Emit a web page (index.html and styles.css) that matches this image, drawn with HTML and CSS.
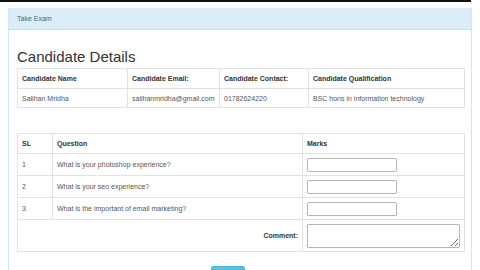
FILE: index.html
```html
<!DOCTYPE html>
<html>
<head>
<meta charset="utf-8">
<link rel="stylesheet" href="styles.css">
</head>
<body>
<div class="topbar"></div>
<div class="panel">
  <div class="panel-heading">Take Exam</div>
  <div class="panel-body">
    <h2 class="title">Candidate Details</h2>
    <table class="grid info">
      <colgroup><col class="c1"><col class="c2"><col class="c3"><col class="c4"></colgroup>
      <tr class="head"><th>Candidate Name</th><th>Candidate Email:</th><th>Candidate Contact:</th><th>Candidate Qualification</th></tr>
      <tr class="row"><td>Salihan Mridha</td><td>salihanmridha@gmail.com</td><td>01782624220</td><td>BSC hons in information technology</td></tr>
    </table>
    <table class="grid exam">
      <colgroup><col class="q1"><col class="q2"><col class="q3"></colgroup>
      <tr class="head"><th>SL</th><th>Question</th><th>Marks</th></tr>
      <tr class="qrow"><td>1</td><td>What is your photoshop experience?</td><td><input class="mark" type="text"></td></tr>
      <tr class="qrow"><td>2</td><td>What is your seo experience?</td><td><input class="mark" type="text"></td></tr>
      <tr class="qrow"><td>3</td><td>What is the important of email marketing?</td><td><input class="mark" type="text"></td></tr>
      <tr class="crow"><td colspan="2" class="clabel">Comment:</td><td><textarea class="comment"></textarea></td></tr>
    </table>
    <div class="actions"><button class="btn">Submit</button></div>
  </div>
</div>
</body>
</html>
```
FILE: styles.css
```css
html, body { margin: 0; padding: 0; background: #fff; overflow: hidden; }
body { font-family: "Liberation Sans", Arial, sans-serif; color: #333; }
.topbar { width: 471px; height: 2px; background: #111; margin-bottom: 6px; }
.panel { margin-left: 8px; width: 462px; border: 1px solid #cbe9f2; border-top: none; }
.panel-heading { height: 21px; line-height: 21px; padding: 0 8px; background: #d9edf7; color: #31708f; font-size: 7px; border-bottom: 1px solid #c6e4ef; }
.panel-body { padding: 0 8px; }
.title { margin: 16px 0 0; font-size: 15px; font-weight: normal; line-height: 21px; color: #333; }
.grid { border-collapse: collapse; width: 447px; font-size: 7px; table-layout: fixed; }
.grid th, .grid td { border: 1px solid #e2e2e2; padding: 0 4px; text-align: left; vertical-align: middle; }
.grid th { font-weight: bold; color: #333; }
.grid td { color: #555; }
.info { margin-top: 1px; }
.c1 { width: 110px; } .c2 { width: 92px; } .c3 { width: 89px; } .c4 { width: 156px; }
.info .head th { height: 19px; }
.info .row td { height: 18px; }
.exam { margin-top: 25px; }
.q1 { width: 35px; } .q2 { width: 250px; } .q3 { width: 162px; }
.exam .head th { height: 19px; }
.exam .qrow td { height: 21px; }
.exam .crow td { height: 31px; }
.grid td.clabel { text-align: right; font-weight: bold; color: #333; padding-right: 4px; }
.mark { box-sizing: border-box; width: 90px; height: 14px; border: 1px solid #b5b5b5; border-radius: 2px; padding: 0; display: block; }
.comment { box-sizing: border-box; width: 153px; height: 24px; border: 1px solid #b5b5b5; border-radius: 2px; padding: 0; display: block; resize: both; }
.actions { padding: 11px 0 0 194px; }
.btn { width: 34px; height: 18px; border: 1px solid #46b8da; border-radius: 2px; background: #5bc0de; color: #fff; font-size: 7px; line-height: 8px; font-family: "Liberation Sans", Arial, sans-serif; padding: 0; }
```
